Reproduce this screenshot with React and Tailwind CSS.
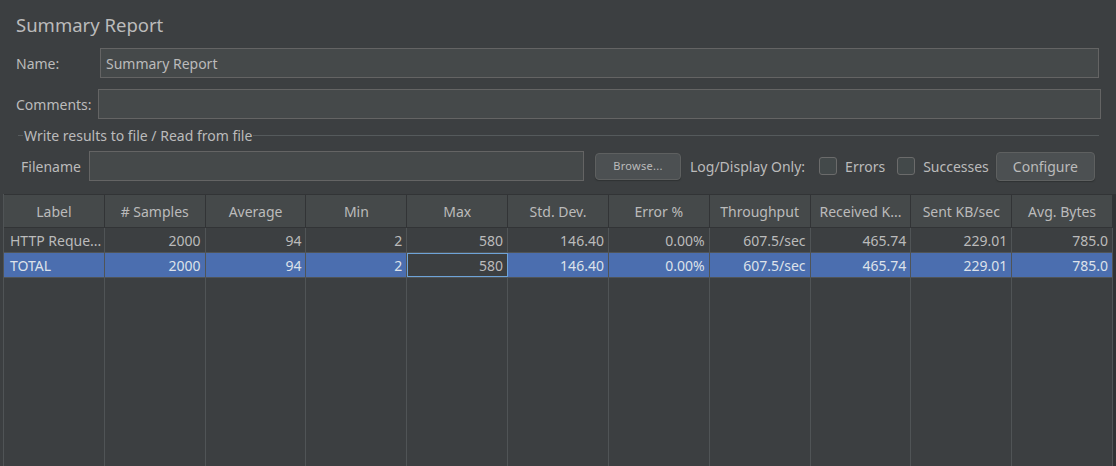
import React from 'react'

const cols = ['Label', '# Samples', 'Average', 'Min', 'Max', 'Std. Dev.', 'Error %', 'Throughput', 'Received K...', 'Sent KB/sec', 'Avg. Bytes']

const rows = [
  ['HTTP Reque...', '2000', '94', '2', '580', '146.40', '0.00%', '607.5/sec', '465.74', '229.01', '785.0'],
  ['TOTAL', '2000', '94', '2', '580', '146.40', '0.00%', '607.5/sec', '465.74', '229.01', '785.0'],
]

const font = { fontFamily: '"Noto Sans", "Open Sans", sans-serif' }

function Field({ className = '', children }) {
  return (
    <div className={`h-[30px] bg-[#45494a] border border-[#646464] flex items-center px-[5px] text-[14px] text-[#bbbbbb] ${className}`}>
      {children}
    </div>
  )
}

function Check() {
  return <div className="w-[18px] h-[18px] rounded-[3px] border border-[#6b6b6b] bg-[#43494a]" />
}

// Summary Report panel, Darcula look
export default function App() {
  return (
    <div style={font} className="w-[1116px] h-[466px] bg-[#3c3f41] text-[#bbbbbb] flex flex-col overflow-hidden">
      <div className="pl-[16px] pt-[13px] text-[18.5px] leading-[24px]">Summary Report</div>

      {/* Name */}
      <div className="flex items-center mt-[11px] pl-[16px] pr-[17px] text-[14px]">
        <span className="w-[84px]">Name:</span>
        <Field className="flex-1">Summary Report</Field>
      </div>

      {/* Comments */}
      <div className="flex items-center mt-[11px] pl-[16px] pr-[15px] text-[14px]">
        <span className="w-[82px]">Comments:</span>
        <Field className="flex-1" />
      </div>

      {/* group box */}
      <div className="relative mt-[8px] ml-[18px] mr-[17px] h-[16px] flex items-center">
        <div className="flex-1 border-t border-[#555a5c]" />
        <span className="absolute left-[5px] top-[-1px] bg-[#3c3f41] px-[1px] text-[14px] leading-[20px]">Write results to file / Read from file</span>
      </div>

      {/* Filename row */}
      <div className="flex items-center mt-[8px] pl-[21px] text-[14px]">
        <span className="w-[68px]">Filename</span>
        <Field className="w-[495px]" />
        <button className="ml-[11px] w-[86px] h-[27px] rounded-[4px] bg-[#4c5052] border border-[#5e6060] shadow-[0_1px_1px_#2f3233] text-[11px] tracking-[0.3px]">Browse...</button>
        <span className="ml-[9px]">Log/Display Only:</span>
        <div className="ml-[14px]"><Check /></div>
        <span className="ml-[8px]">Errors</span>
        <div className="ml-[12px]"><Check /></div>
        <span className="ml-[8px]">Successes</span>
        <button className="ml-[7px] w-[99px] h-[29px] rounded-[4px] bg-[#4c5052] border border-[#5e6060] shadow-[0_1px_1px_#2f3233] text-[14px]">Configure</button>
      </div>

      {/* table */}
      <div className="mt-[13px] flex-1 flex pl-[3px]">
        <div className="w-[1110px] flex flex-col border-l border-[#505456]">
          <div className="grid grid-cols-11 h-[34px] bg-[#45494a] border-t border-b border-[#323436]">
            {cols.map((c, i) => (
              <div key={i} className="flex items-center justify-center text-[14px] border-r border-[#323436] whitespace-nowrap">{c}</div>
            ))}
          </div>
          {rows.map((r, ri) => (
            <div key={ri} className={`grid grid-cols-11 h-[25px] border-b border-[#505456] ${ri === 1 ? 'bg-[#4b6eaf] text-[#dde2ea]' : ''}`}>
              {r.map((v, i) => {
                const focus = ri === 1 && i === 4
                return (
                  <div key={i}
                    className={`flex items-center text-[14px] whitespace-nowrap overflow-hidden border-r ${i === 0 ? 'justify-start pl-[6px]' : 'justify-end pr-[4px]'} ${focus ? 'bg-[#3c3f41] border border-[#6ea3d8] text-[#bbbbbb]' : 'border-[#505456]'}`}>
                    {v}
                  </div>
                )
              })}
            </div>
          ))}
          <div className="flex-1 grid grid-cols-11">
            {cols.map((c, i) => <div key={i} className="border-r border-[#505456]" />)}
          </div>
        </div>
        <div className="flex-1 bg-[#313335]" />
      </div>
    </div>
  )
}
